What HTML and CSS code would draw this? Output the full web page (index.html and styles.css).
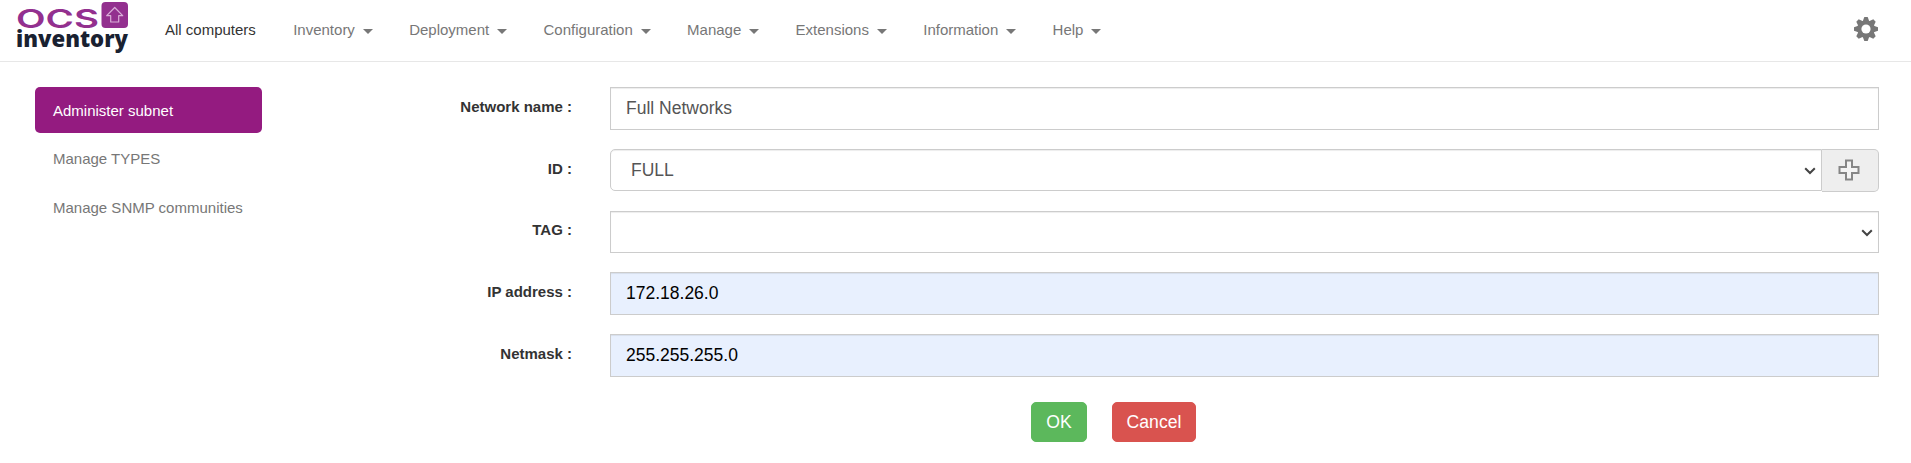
FILE: index.html
```html
<!DOCTYPE html>
<html lang="en">
<head>
<meta charset="utf-8">
<title>OCS Inventory</title>
<link rel="stylesheet" href="styles.css">
</head>
<body>
<header class="navbar">
  <a class="brand" aria-label="OCS inventory">
    <svg class="logo" width="140" height="60" viewBox="0 0 140 60">
      <text class="logo-top" x="16" y="27.500" textLength="83" lengthAdjust="spacingAndGlyphs">OCS</text>
      <rect x="101.500" y="2" width="26.500" height="26" rx="4" fill="#93308f"/>
      <path d="M114.700 7.500l8 8.200h-4v6.300h-8v-6.300h-4z" fill="none" stroke="#d9aed8" stroke-width="1.200" stroke-linejoin="round"/>
      <text class="logo-bottom" x="16" y="47" textLength="112" lengthAdjust="spacingAndGlyphs">inventory</text>
    </svg>
  </a>
  <nav class="menu">
    <a class="item active">All computers</a>
    <a class="item">Inventory<i class="caret"></i></a>
    <a class="item">Deployment<i class="caret"></i></a>
    <a class="item">Configuration<i class="caret"></i></a>
    <a class="item">Manage<i class="caret"></i></a>
    <a class="item">Extensions<i class="caret"></i></a>
    <a class="item">Information<i class="caret"></i></a>
    <a class="item">Help<i class="caret"></i></a>
  </nav>
  <svg class="gear" width="24" height="24" viewBox="-12 -12 24 24">
    <g fill="#777">
      <path id="t" d="M-3.500-7L-1.700-12H1.700L3.500-7V7L1.700 12H-1.700L-3.500 7z"/>
      <use href="#t" transform="rotate(45)"/>
      <use href="#t" transform="rotate(90)"/>
      <use href="#t" transform="rotate(135)"/>
      <circle r="8.800"/>
    </g>
    <circle r="4.600" fill="#fff"/>
  </svg>
</header>
<main class="content">
  <aside class="sidebar">
    <a class="pill selected">Administer subnet</a>
    <a class="pill">Manage TYPES</a>
    <a class="pill">Manage SNMP communities</a>
  </aside>
  <form class="form">
    <div class="row">
      <label class="label">Network name :</label>
      <div class="control">Full Networks</div>
    </div>
    <div class="row">
      <label class="label">ID :</label>
      <div class="group">
        <div class="control select grouped">FULL
          <svg class="chevron" width="12" height="8" viewBox="0 0 12 8"><path d="M1.200 1.200L6 6l4.800-4.800"/></svg>
        </div>
        <div class="addon">
          <svg width="22" height="22" viewBox="0 0 22 22"><path d="M8 1.500h6v6.500h6.500v6h-6.500v6.500h-6v-6.500h-6.500v-6h6.500z" fill="#f3f3f3" stroke="#858585" stroke-width="2"/></svg>
        </div>
      </div>
    </div>
    <div class="row short">
      <label class="label">TAG :</label>
      <div class="control select">
        <svg class="chevron" width="12" height="8" viewBox="0 0 12 8"><path d="M1.200 1.200L6 6l4.800-4.800"/></svg>
      </div>
    </div>
    <div class="row">
      <label class="label">IP address :</label>
      <div class="control filled">172.18.26.0</div>
    </div>
    <div class="row">
      <label class="label">Netmask :</label>
      <div class="control filled">255.255.255.0</div>
    </div>
    <div class="actions">
      <button type="button" class="btn ok">OK</button>
      <button type="button" class="btn cancel">Cancel</button>
    </div>
  </form>
</main>
</body>
</html>
```
FILE: styles.css
```css
* { box-sizing: border-box; }
body {
  margin: 0;
  background: #fff;
  color: #333;
  font-family: "Liberation Sans", Arial, sans-serif;
  font-size: 15px;
}
.navbar {
  display: flex;
  align-items: flex-start;
  height: 62px;
  border-bottom: 1px solid #e7e7e7;
}
.brand { width: 165px; }
.logo { display: block; }
.logo-top { font: 600 26px Inter, sans-serif; fill: #93308f; }
.logo-bottom { font: 800 22px "Open Sans", sans-serif; fill: #192131; }
.menu {
  display: flex;
  flex: 1;
  gap: 36.3px;
  height: 58px;
  align-items: center;
}
.item {
  display: flex;
  align-items: center;
  color: #777;
  white-space: nowrap;
}
.item.active { margin-right: 1px; color: #333; }
.caret {
  margin: 5px 0 0 8px;
  border: 5px solid transparent;
  border-top-color: #777;
  border-bottom: 0;
}
.gear { margin: 17px 33px 0 0; }
.content {
  display: flex;
  padding: 25px 32px 0 35px;
}
.sidebar {
  display: flex;
  flex-direction: column;
  gap: 3px;
  width: 227px;
}
.pill {
  display: flex;
  align-items: center;
  height: 46px;
  padding: 0 0 2px 18px;
  border-radius: 5px;
  color: #777;
}
.pill.selected { padding-bottom: 0; background: #941b80; color: #fff; }
.form { flex: 1; }
.row {
  display: flex;
  height: 43px;
  margin-bottom: 19px;
}
.row.short { height: 42px; }
.row.short .label { padding-top: 10px; }
.label {
  width: 310px;
  padding-top: 11px;
  line-height: 18px;
  text-align: right;
  font-weight: bold;
}
.control {
  flex: 1;
  display: flex;
  align-items: center;
  height: 43px;
  margin-left: 38px;
  padding: 0 15px;
  border: 1px solid #ccc;
  box-shadow: inset 0 1px 1px rgba(0, 0, 0, .075);
  color: #555;
  font-size: 17.5px;
}
.select { justify-content: space-between; height: 42px; padding: 0 5px 0 20px; }
.select .chevron { margin: 1px 0 0 auto; }
.grouped { border-radius: 5px 0 0 5px; }
.chevron path { fill: none; stroke: #444; stroke-width: 2; }
.group { display: flex; flex: 1; }
.addon {
  display: flex;
  align-items: center;
  justify-content: center;
  width: 57px;
  height: 43px;
  padding: 0 2px 2px 0;
  border: 1px solid #ccc;
  border-left: 0;
  border-radius: 0 5px 5px 0;
  background: #eee;
}
.filled { background: #e8f0fe; color: #000; }
.actions {
  display: flex;
  gap: 25px;
  margin: 25px 0 0 769px;
}
.btn {
  height: 40px;
  padding: 0;
  border: 1px solid;
  border-radius: 5px;
  color: #fff;
  font: 17.6px "Liberation Sans", Arial, sans-serif;
}
.ok { width: 56px; background: #5cb85c; border-color: #5cb85c; }
.cancel { width: 84px; background: #d9534f; border-color: #d9534f; }
```
